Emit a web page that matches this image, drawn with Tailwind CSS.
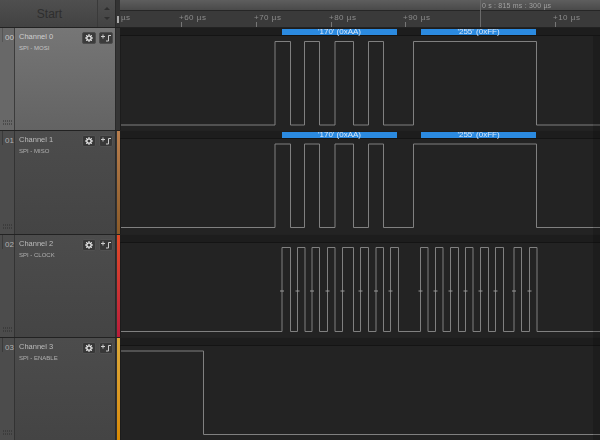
<!DOCTYPE html>
<html lang="en">
<head>
    <meta charset="UTF-8">
    <title>Logic - SPI capture</title>
    <script src="https://cdn.jsdelivr.net/npm/@tailwindcss/browser@4"></script>
</head>
<body class="relative w-[600px] h-[440px] overflow-hidden bg-[#232323] font-['Liberation_Sans',sans-serif] blur-[0.3px]">

    <!-- Top bar: start button and ruler -->
    <header class="flex h-[28px] border-b border-[#222]">
        <div class="w-[116px] flex bg-gradient-to-b from-[#4f4f4f] to-[#424242] pl-[2px] border-r border-[#2a2a2a]">
            <div class="flex-1 flex items-center justify-center text-[12px] text-[#2e2e2e]">Start</div>
            <div class="w-[18px] border-l border-[#3a3a3a] flex flex-col items-center justify-center gap-[7px]">
                <div class="w-0 h-0 border-x-[3px] border-x-transparent border-b-[3px] border-b-[#2f2f2f]"></div>
                <div class="w-0 h-0 border-x-[3px] border-x-transparent border-t-[3px] border-t-[#2f2f2f]"></div>
            </div>
        </div>
        <div class="w-[4px] bg-[#333] pt-[16px]">
            <div class="ml-[1px] w-[2px] h-[7px] bg-[#aaa]"></div>
        </div>
        <div class="flex-1 flex flex-col shadow-[inset_1px_0_0_#1c1c1c]">
            <div class="h-[11px] bg-gradient-to-b from-[#5e5e5e] to-[#4a4a4a] border-b border-[#262626] relative">
                <span class="absolute left-[362px] top-0 leading-[11px] text-[7px] tracking-[0.2px] text-[#a0a0a0] whitespace-nowrap">0 s : 815 ms : 300 µs</span>
            </div>
            <!-- ruler labels sit at their time positions -->
            <div class="flex-1 bg-[#3a3a3a] relative text-[8px] tracking-[0.5px] text-[#8c8c8c] leading-[8px]">
                <span class="absolute left-[1px] top-[3px]">µs</span>
                <span class="absolute left-[59px] top-[3px] whitespace-nowrap">+60 µs</span>
                <span class="absolute left-[134px] top-[3px] whitespace-nowrap">+70 µs</span>
                <span class="absolute left-[209px] top-[3px] whitespace-nowrap">+80 µs</span>
                <span class="absolute left-[283px] top-[3px] whitespace-nowrap">+90 µs</span>
                <span class="absolute left-[433px] top-[3px] whitespace-nowrap">+10 µs</span>
                <i class="absolute left-[61px] bottom-0 w-px h-[5px] bg-[#777]"></i>
                <i class="absolute left-[136px] bottom-0 w-px h-[5px] bg-[#777]"></i>
                <i class="absolute left-[211px] bottom-0 w-px h-[5px] bg-[#777]"></i>
                <i class="absolute left-[285px] bottom-0 w-px h-[5px] bg-[#777]"></i>
                <i class="absolute left-[435px] bottom-0 w-px h-[5px] bg-[#777]"></i>
                <i class="absolute left-[360px] -top-[11px] bottom-0 w-px bg-[#6a6a6a]"></i>
            </div>
        </div>
    </header>

    <!-- Channel 0 -->
    <section class="flex h-[103px] border-b border-[#222]">
        <div class="w-[116px] flex bg-gradient-to-b from-[#767676] to-[#636363] border-r border-[#2a2a2a]">
            <div class="w-[15px] pl-[2px] flex flex-col border-r border-[#3c3c3c] bg-[#686868]">
                <div class="border-l border-[#555] pl-[2px] pt-[5px] text-[8px] leading-[9px] text-[#c8c8c8]">00</div>
                <svg class="mt-auto mb-[5px] ml-[1px]" width="10" height="5"><path d="M0 1h10M0 4h10" stroke="#2c2c2c" stroke-dasharray="1 1"/></svg>
            </div>
            <div class="flex-1 flex justify-between pl-[4px] pr-[2px] pt-[4px]">
                <div>
                    <div class="text-[7.5px] leading-[10px] text-[#cfcfcf]">Channel 0</div>
                    <div class="text-[6px] leading-[8px] mt-[2px] text-[#c4c4c4]">SPI - MOSI</div>
                </div>
                <div class="flex gap-[3px] h-[12px]">
                    <div class="w-[14px] h-[12px] rounded-[2px] bg-[#3b3b3b] border border-[#4c4c4c] flex items-center justify-center">
                        <svg width="8" height="8" viewBox="0 0 8 8"><circle cx="4" cy="4" r="2.2" fill="none" stroke="#eee" stroke-width="1.3"/><path d="M4 0v1.4M4 6.6V8M0 4h1.4M6.6 4H8M1.2 1.2l1 1M5.800 5.800l1 1M6.800 1.200l-1 1M2.200 5.800l-1 1" stroke="#eee"/></svg>
                    </div>
                    <div class="w-[14px] h-[12px] rounded-[2px] bg-[#3b3b3b] border border-[#4c4c4c] flex items-center justify-center">
                        <svg width="11" height="8" viewBox="0 0 11 8"><path d="M0 2.500h4M2 .5v4M5 7h2.500V1.500H10" fill="none" stroke="#ccc"/></svg>
                    </div>
                </div>
            </div>
        </div>
        <div class="w-[4px] bg-[#353535]"></div>
        <div class="flex-1 flex flex-col shadow-[inset_1px_0_0_#1c1c1c]">
            <div class="h-[8px] bg-[#1d1d1d] border-b border-[#141414] flex pt-px text-[8px] leading-[6px] text-[#d8e8fa] text-center">
                <div class="ml-[162px] w-[115px] h-[6px] bg-[#2b8ae0]">'170' (0xAA)</div>
                <div class="ml-[24px] w-[115px] h-[6px] bg-[#2b8ae0]">'255' (0xFF)</div>
            </div>
            <svg class="block" width="480" height="94" viewBox="120 36 480 94">
                <path d="M121 125H275V41.500H290.500V125H304.500V41.500H319.500V125H335V41.500H353.500V125H368.500V41.500H383.500V125H413.500V41.500H536.500V125H600" fill="none" stroke="#808080"/>
            </svg>
        </div>
    </section>

    <!-- Channel 1 -->
    <section class="flex h-[104px] border-b border-[#222]">
        <div class="w-[116px] flex bg-gradient-to-b from-[#4c4c4c] to-[#444] border-r border-[#2a2a2a]">
            <div class="w-[15px] pl-[2px] flex flex-col border-r border-[#333] bg-[#4c4c4c]">
                <div class="border-l border-[#3a3a3a] pl-[2px] pt-[5px] text-[8px] leading-[9px] text-[#b0b0b0]">01</div>
                <svg class="mt-auto mb-[5px] ml-[1px]" width="10" height="5"><path d="M0 1h10M0 4h10" stroke="#2c2c2c" stroke-dasharray="1 1"/></svg>
            </div>
            <div class="flex-1 flex justify-between pl-[4px] pr-[2px] pt-[4px]">
                <div>
                    <div class="text-[7.5px] leading-[10px] text-[#bbb]">Channel 1</div>
                    <div class="text-[6px] leading-[8px] mt-[2px] text-[#b0b0b0]">SPI - MISO</div>
                </div>
                <div class="flex gap-[3px] h-[12px]">
                    <div class="w-[14px] h-[12px] rounded-[2px] bg-[#383838] border border-[#515151] flex items-center justify-center">
                        <svg width="8" height="8" viewBox="0 0 8 8"><circle cx="4" cy="4" r="2.2" fill="none" stroke="#eee" stroke-width="1.3"/><path d="M4 0v1.4M4 6.6V8M0 4h1.4M6.6 4H8M1.2 1.2l1 1M5.800 5.800l1 1M6.800 1.200l-1 1M2.200 5.800l-1 1" stroke="#eee"/></svg>
                    </div>
                    <div class="w-[14px] h-[12px] rounded-[2px] bg-[#383838] border border-[#515151] flex items-center justify-center">
                        <svg width="11" height="8" viewBox="0 0 11 8"><path d="M0 2.500h4M2 .5v4M5 7h2.500V1.500H10" fill="none" stroke="#ccc"/></svg>
                    </div>
                </div>
            </div>
        </div>
        <div class="w-[4px] bg-[#333] pl-[1px]"><div class="w-[3px] h-full bg-gradient-to-b from-[#b97f4e] to-[#8a5a28]"></div></div>
        <div class="flex-1 flex flex-col shadow-[inset_1px_0_0_#1c1c1c]">
            <div class="h-[8px] bg-[#1d1d1d] border-b border-[#141414] flex pt-px text-[8px] leading-[6px] text-[#d8e8fa] text-center">
                <div class="ml-[162px] w-[115px] h-[6px] bg-[#2b8ae0]">'170' (0xAA)</div>
                <div class="ml-[24px] w-[115px] h-[6px] bg-[#2b8ae0]">'255' (0xFF)</div>
            </div>
            <svg class="block" width="480" height="95" viewBox="120 140 480 95">
                <path d="M121 228.500H275V145H290.500V228.500H304.500V145H319.500V228.500H335V145H353.500V228.500H368.500V145H383.500V228.500H413.500V145H536.500V228.500H600" fill="none" stroke="#808080"/>
            </svg>
        </div>
    </section>

    <!-- Channel 2 -->
    <section class="flex h-[103px] border-b border-[#222]">
        <div class="w-[116px] flex bg-gradient-to-b from-[#4c4c4c] to-[#444] border-r border-[#2a2a2a]">
            <div class="w-[15px] pl-[2px] flex flex-col border-r border-[#333] bg-[#4c4c4c]">
                <div class="border-l border-[#3a3a3a] pl-[2px] pt-[5px] text-[8px] leading-[9px] text-[#b0b0b0]">02</div>
                <svg class="mt-auto mb-[5px] ml-[1px]" width="10" height="5"><path d="M0 1h10M0 4h10" stroke="#2c2c2c" stroke-dasharray="1 1"/></svg>
            </div>
            <div class="flex-1 flex justify-between pl-[4px] pr-[2px] pt-[4px]">
                <div>
                    <div class="text-[7.5px] leading-[10px] text-[#bbb]">Channel 2</div>
                    <div class="text-[6px] leading-[8px] mt-[2px] text-[#b0b0b0]">SPI - CLOCK</div>
                </div>
                <div class="flex gap-[3px] h-[12px]">
                    <div class="w-[14px] h-[12px] rounded-[2px] bg-[#383838] border border-[#515151] flex items-center justify-center">
                        <svg width="8" height="8" viewBox="0 0 8 8"><circle cx="4" cy="4" r="2.2" fill="none" stroke="#eee" stroke-width="1.3"/><path d="M4 0v1.4M4 6.6V8M0 4h1.4M6.6 4H8M1.2 1.2l1 1M5.800 5.800l1 1M6.800 1.200l-1 1M2.200 5.800l-1 1" stroke="#eee"/></svg>
                    </div>
                    <div class="w-[14px] h-[12px] rounded-[2px] bg-[#383838] border border-[#515151] flex items-center justify-center">
                        <svg width="11" height="8" viewBox="0 0 11 8"><path d="M0 2.500h4M2 .5v4M5 7h2.500V1.500H10" fill="none" stroke="#ccc"/></svg>
                    </div>
                </div>
            </div>
        </div>
        <div class="w-[4px] bg-[#333] pl-[1px]"><div class="w-[3px] h-full bg-gradient-to-b from-[#e24a26] to-[#b81b3a]"></div></div>
        <div class="flex-1 flex flex-col shadow-[inset_1px_0_0_#1c1c1c]">
            <div class="h-[8px] bg-[#1d1d1d] border-b border-[#141414]"></div>
            <svg class="block" width="480" height="94" viewBox="120 243 480 94">
                <path d="M121 331.500H282V247.500H290.500V331.500H297.500V247.500H305V331.500H312V247.500H319.500V331.500H327.500V247.500H335V331.500H342.500V247.500H353.500V331.500H360.500V247.500H368.500V331.500H376V247.500H383.500V331.500H390.500V247.500H398.500V331.500H420.500V247.500H428V331.500H435.500V247.500H443V331.500H450.500V247.500H458.500V331.500H465.500V247.500H473V331.500H480.500V247.500H488.500V331.500H495.500V247.500H503.500V331.500H514V247.500H521.500V331.500H529.500V247.500H537V331.500H600" fill="none" stroke="#808080"/>
                <path d="M280 291h4M295.500 291h4M310 291h4M325.500 291h4M340.500 291h4M358.500 291h4M374 291h4M388.500 291h4M418.500 291h4M433.500 291h4M448.500 291h4M463.500 291h4M478.500 291h4M493.500 291h4M512 291h4M527.500 291h4" stroke="#999"/>
            </svg>
        </div>
    </section>

    <!-- Channel 3 -->
    <section class="flex h-[102px]">
        <div class="w-[116px] flex bg-gradient-to-b from-[#4c4c4c] to-[#444] border-r border-[#2a2a2a]">
            <div class="w-[15px] pl-[2px] flex flex-col border-r border-[#333] bg-[#4c4c4c]">
                <div class="border-l border-[#3a3a3a] pl-[2px] pt-[5px] text-[8px] leading-[9px] text-[#b0b0b0]">03</div>
                <svg class="mt-auto mb-[5px] ml-[1px]" width="10" height="5"><path d="M0 1h10M0 4h10" stroke="#2c2c2c" stroke-dasharray="1 1"/></svg>
            </div>
            <div class="flex-1 flex justify-between pl-[4px] pr-[2px] pt-[4px]">
                <div>
                    <div class="text-[7.5px] leading-[10px] text-[#bbb]">Channel 3</div>
                    <div class="text-[6px] leading-[8px] mt-[2px] text-[#b0b0b0]">SPI - ENABLE</div>
                </div>
                <div class="flex gap-[3px] h-[12px]">
                    <div class="w-[14px] h-[12px] rounded-[2px] bg-[#383838] border border-[#515151] flex items-center justify-center">
                        <svg width="8" height="8" viewBox="0 0 8 8"><circle cx="4" cy="4" r="2.2" fill="none" stroke="#eee" stroke-width="1.3"/><path d="M4 0v1.4M4 6.6V8M0 4h1.4M6.6 4H8M1.2 1.2l1 1M5.800 5.800l1 1M6.800 1.200l-1 1M2.200 5.800l-1 1" stroke="#eee"/></svg>
                    </div>
                    <div class="w-[14px] h-[12px] rounded-[2px] bg-[#383838] border border-[#515151] flex items-center justify-center">
                        <svg width="11" height="8" viewBox="0 0 11 8"><path d="M0 2.500h4M2 .5v4M5 7h2.500V1.500H10" fill="none" stroke="#ccc"/></svg>
                    </div>
                </div>
            </div>
        </div>
        <div class="w-[4px] bg-[#333] pl-[1px]"><div class="w-[3px] h-full bg-gradient-to-b from-[#dcaa3a] to-[#d98a00]"></div></div>
        <div class="flex-1 flex flex-col shadow-[inset_1px_0_0_#1c1c1c]">
            <div class="h-[8px] bg-[#1d1d1d] border-b border-[#141414]"></div>
            <svg class="block" width="480" height="94" viewBox="120 346 480 94">
                <path d="M121 351H203.500V434.500H600" fill="none" stroke="#808080"/>
            </svg>
        </div>
    </section>

    <!-- darker scroll gutter along the right edge -->
    <div class="absolute right-0 top-[36px] bottom-0 w-[7px] bg-black/15"></div>

</body>
</html>
